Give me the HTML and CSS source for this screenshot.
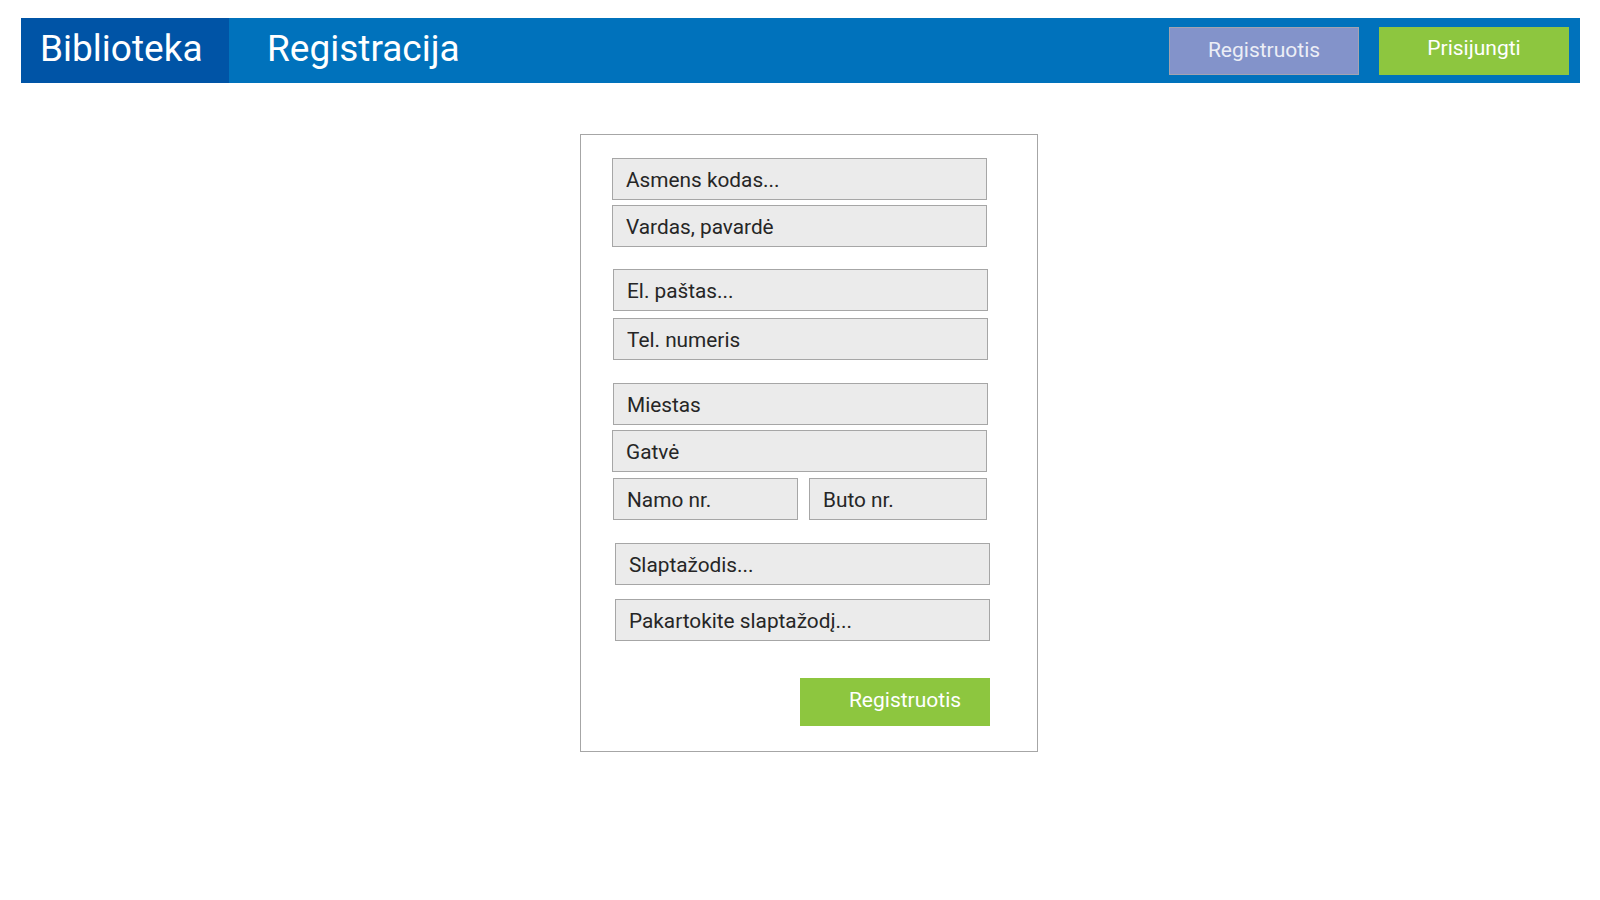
FILE: index.html
```html
<!DOCTYPE html>
<html lang="lt">
<head>
<meta charset="utf-8">
<title>Biblioteka – Registracija</title>
<link rel="stylesheet" href="styles.css">
</head>
<body>
<header class="topbar">
  <div class="brand">Biblioteka</div>
  <div class="page-title">Registracija</div>
  <nav class="actions">
    <a class="btn btn-muted" href="#">Registruotis</a>
    <a class="btn btn-green" href="#">Prisijungti</a>
  </nav>
</header>

<main class="card">
  <form class="reg-form">
    <input class="field" type="text" placeholder="Asmens kodas...">
    <input class="field gap-5" type="text" placeholder="Vardas, pavardė">

    <input class="field shift-1 gap-22" type="email" placeholder="El. paštas...">
    <input class="field shift-1 gap-7" type="tel" placeholder="Tel. numeris">

    <input class="field shift-1 gap-23" type="text" placeholder="Miestas">
    <input class="field gap-5" type="text" placeholder="Gatvė">
    <div class="field-row shift-1 gap-6">
      <input class="field field-house" type="text" placeholder="Namo nr.">
      <input class="field field-flat" type="text" placeholder="Buto nr.">
    </div>

    <input class="field shift-3 gap-23" type="password" placeholder="Slaptažodis...">
    <input class="field shift-3 gap-14" type="password" placeholder="Pakartokite slaptažodį...">

    <button class="submit" type="button">Registruotis</button>
  </form>
</main>
</body>
</html>
```
FILE: styles.css
```css
* { box-sizing: border-box; }

body {
  margin: 0;
  background: #ffffff;
  font-family: Roboto, "Noto Sans", "Liberation Sans", sans-serif;
  color: #222222;
}

.topbar {
  display: flex;
  align-items: stretch;
  height: 65px;
  margin: 18px 20px 0 21px;
  background: #0072bc;
  color: #ffffff;
}

.brand {
  display: flex;
  align-items: center;
  width: 208px;
  padding: 0 0 4px 19px;
  background: #0054a6;
  font-size: 37px;
}

.page-title {
  display: flex;
  align-items: center;
  margin-left: 38px;
  padding-bottom: 4px;
  font-size: 37px;
}

.actions {
  display: flex;
  align-items: flex-start;
  gap: 20px;
  margin-left: auto;
  padding: 9px 11px 0 0;
}

.btn {
  display: flex;
  align-items: center;
  justify-content: center;
  width: 190px;
  height: 48px;
  padding-bottom: 2px;
  font-size: 21px;
  text-decoration: none;
}

.btn-muted {
  background: #8393ca;
  border: 1px solid #a3a3b0;
  color: #eceef6;
}

.btn-green {
  background: #8dc63f;
  color: #ffffff;
  padding-bottom: 6px;
}

.card {
  width: 458px;
  height: 618px;
  margin: 51px 0 0 580px;
  border: 1px solid #a6a6a6;
  padding: 23px 0 0 31px;
}

.reg-form {
  display: flex;
  flex-direction: column;
  align-items: flex-start;
}

.field {
  display: block;
  width: 375px;
  height: 42px;
  margin: 0;
  padding: 1px 13px 0;
  border: 1px solid #a6a6a6;
  border-radius: 0;
  background: #ebebeb;
  font-family: Roboto, "Noto Sans", "Liberation Sans", sans-serif;
  font-size: 20.8px;
  color: #262626;
  outline: none;
}

.field::placeholder {
  color: #262626;
  opacity: 1;
}

.field-row {
  display: flex;
  gap: 11px;
  width: 374px;
}

.field-house { width: 185px; }
.field-flat { width: 178px; }

.shift-1 { margin-left: 1px; }
.shift-3 { margin-left: 3px; }

.gap-5 { margin-top: 5px; }
.gap-6 { margin-top: 6px; }
.gap-7 { margin-top: 7px; }
.gap-14 { margin-top: 14px; }
.gap-22 { margin-top: 22px; }
.gap-23 { margin-top: 23px; }

.submit {
  display: flex;
  align-items: center;
  justify-content: center;
  width: 190px;
  height: 48px;
  margin: 37px 0 0 188px;
  padding: 0 0 4px 20px;
  border: none;
  background: #8dc63f;
  color: #ffffff;
  font-family: Roboto, "Noto Sans", "Liberation Sans", sans-serif;
  font-size: 21px;
  cursor: pointer;
}
```
